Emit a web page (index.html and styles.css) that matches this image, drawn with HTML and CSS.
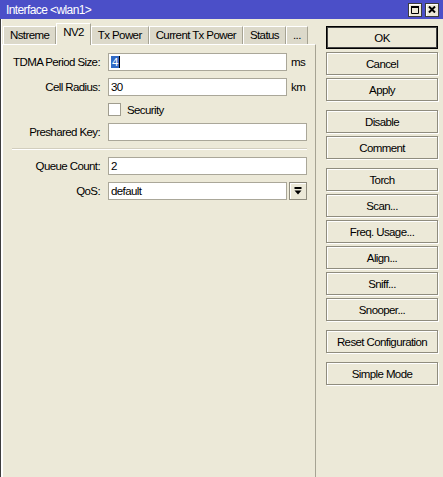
FILE: index.html
```html
<!DOCTYPE html>
<html>
<head>
<meta charset="utf-8">
<link rel="stylesheet" href="styles.css">
</head>
<body>
<div class="window">
  <div class="titlebar">
    <span class="title">Interface &lt;wlan1&gt;</span>
    <div class="tbtns">
      <span class="tbtn"><svg width="8" height="8" viewBox="0 0 8 8"><path d="M0.5 0.5h7v7h-7z" fill="none" stroke="#000"/><rect x="0" y="0" width="8" height="2" fill="#000"/></svg></span>
      <span class="tbtn"><svg width="8" height="7" viewBox="0 0 8 7"><path d="M1 0.5L7 6.5M7 0.5L1 6.5" stroke="#000" stroke-width="2" fill="none"/></svg></span>
    </div>
  </div>
  <div class="body">
    <div class="left">
      <div class="tabs">
        <div class="tab">Nstreme</div>
        <div class="tab active">NV2</div>
        <div class="tab">Tx Power</div>
        <div class="tab">Current Tx Power</div>
        <div class="tab">Status</div>
        <div class="tab">...</div>
      </div>
      <div class="panel">
        <div class="form">
          <div class="label">TDMA Period Size:</div>
          <div class="ctrl"><div class="field short"><span class="sel">4</span></div><span class="unit">ms</span></div>
          <div class="label">Cell Radius:</div>
          <div class="ctrl"><div class="field short">30</div><span class="unit">km</span></div>
          <div class="label cb-row"></div>
          <div class="ctrl cb-row"><span class="checkbox"></span><span class="cb-label">Security</span></div>
          <div class="label">Preshared Key:</div>
          <div class="ctrl"><div class="field long"></div></div>
          <div class="sep"></div>
          <div class="label">Queue Count:</div>
          <div class="ctrl"><div class="field long">2</div></div>
          <div class="label">QoS:</div>
          <div class="ctrl"><div class="field short">default</div><span class="drop"><svg width="8" height="8" viewBox="0 0 8 8"><rect x="0.5" y="0" width="7" height="2" fill="#000"/><path d="M0.5 3.5h7L4 7.5z" fill="#000"/></svg></span></div>
        </div>
      </div>
    </div>
    <div class="buttons">
      <div class="group">
        <div class="btn default">OK</div>
        <div class="btn">Cancel</div>
        <div class="btn">Apply</div>
      </div>
      <div class="group">
        <div class="btn">Disable</div>
        <div class="btn">Comment</div>
      </div>
      <div class="group">
        <div class="btn">Torch</div>
        <div class="btn">Scan...</div>
        <div class="btn">Freq. Usage...</div>
        <div class="btn">Align...</div>
        <div class="btn">Sniff...</div>
        <div class="btn">Snooper...</div>
      </div>
      <div class="group">
        <div class="btn">Reset Configuration</div>
      </div>
      <div class="group">
        <div class="btn">Simple Mode</div>
      </div>
    </div>
  </div>
</div>
</body>
</html>
```
FILE: styles.css
```css
html, body {
  margin: 0;
  padding: 0;
}
body {
  background: #ece9d8;
  font-family: "Liberation Sans", Arial, sans-serif;
  font-size: 11.5px;
  letter-spacing: -0.6px;
  color: #000;
}
.window {
  height: 477px;
  display: flex;
  flex-direction: column;
  overflow: hidden;
}
.titlebar {
  height: 19px;
  flex: none;
  background: #4b4fc8;
  color: #fff;
  display: flex;
  align-items: center;
  justify-content: space-between;
  padding: 0 4px 0 6px;
  font-size: 12px;
}
.tbtns {
  display: flex;
  gap: 3px;
}
.tbtn {
  width: 14px;
  height: 14px;
  box-sizing: border-box;
  background: #ece9d8;
  border: 1px solid #3c3c3c;
  box-shadow: inset 1px 1px 0 #fff;
  display: flex;
  align-items: center;
  justify-content: center;
}
.tbtn svg { display: block; }
.body {
  flex: 1;
  display: flex;
  border-left: 1px solid #3d3d3d;
  box-shadow: inset 1px 0 0 #fff;
  padding-left: 1px;
  min-height: 0;
}
.left {
  width: 314px;
  display: flex;
  flex-direction: column;
}
.tabs {
  height: 21px;
  margin-top: 4px;
  padding-left: 1px;
  display: flex;
  align-items: flex-end;
}
.tab {
  height: 18px;
  box-sizing: border-box;
  padding: 0 6px;
  background: #dcd9ca;
  border-top: 1px solid #fff;
  border-left: 1px solid #fff;
  border-right: 1px solid #a6a393;
  line-height: 17px;
  white-space: nowrap;
}
.tab.active {
  height: 22px;
  margin-bottom: -1px;
  background: #ece9d8;
  line-height: 16px;
  padding-bottom: 4px;
  position: relative;
  z-index: 1;
}
.panel {
  flex: 1;
  border-top: 1px solid #fff;
  border-left: 1px solid #fff;
  border-right: 1px solid #a6a393;
  padding-top: 8px;
}
.form {
  display: grid;
  grid-template-columns: 97px 1fr;
  column-gap: 8px;
  row-gap: 7px;
}
.label {
  height: 18px;
  line-height: 18px;
  text-align: right;
  white-space: nowrap;
}
.ctrl {
  height: 18px;
  display: flex;
  align-items: center;
}
.cb-row { height: 13px; }
.field {
  height: 18px;
  box-sizing: border-box;
  border: 1px solid #aaa799;
  background: #fff;
  padding-left: 2px;
  line-height: 16px;
  white-space: nowrap;
}
.field.short { width: 179px; }
.field.long { width: 199px; }
.sel {
  background: #316ac5;
  color: #fff;
  padding: 0 1px;
  border-right: 1px solid #000;
}
.unit { margin-left: 4px; }
.checkbox {
  width: 13px;
  height: 13px;
  box-sizing: border-box;
  border: 1px solid #a09d8f;
  background: #fff;
}
.cb-label { margin-left: 6px; }
.sep {
  grid-column: 1 / -1;
  height: 0;
  border-top: 1px solid #d2cebe;
  border-bottom: 1px solid #fff;
  margin: 0 8px 0 9px;
}
.drop {
  width: 18px;
  height: 18px;
  box-sizing: border-box;
  margin-left: 2px;
  border: 1px solid #8f8c7e;
  box-shadow: inset 1px 1px 0 #fff;
  display: flex;
  align-items: center;
  justify-content: center;
}
.drop svg { display: block; }
.buttons {
  margin-left: 10px;
  padding-top: 7px;
  width: 112px;
  display: flex;
  flex-direction: column;
  gap: 9px;
}
.group {
  display: flex;
  flex-direction: column;
  gap: 3px;
}
.btn {
  height: 23px;
  box-sizing: border-box;
  border: 1px solid #8f8c7e;
  box-shadow: inset 1px 1px 0 #fff, 1px 1px 0 #fff;
  display: flex;
  align-items: center;
  justify-content: center;
  white-space: nowrap;
}
.btn.default {
  border-color: #000;
  box-shadow: inset 0 0 0 1px #444;
}
```
